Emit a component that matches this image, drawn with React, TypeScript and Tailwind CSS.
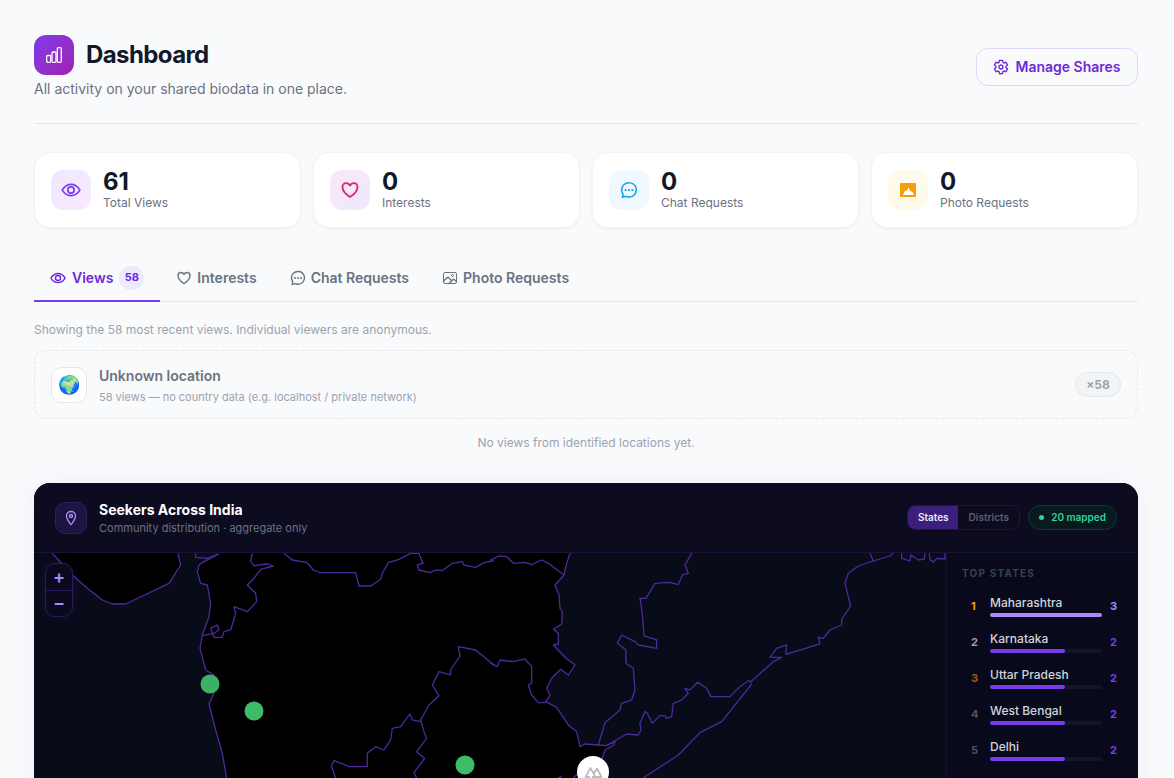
import {
  IoChatbubbleEllipsesOutline,
  IoEyeOutline,
  IoHeartOutline,
  IoImageOutline,
  IoLocationOutline,
  IoSettingsOutline,
} from "react-icons/io5";

const stats = [
  { value: "61", label: "Total Views", box: "bg-gradient-to-br from-[#ede9fe] to-[#fae8ff]", icon: <IoEyeOutline className="h-5 w-5 text-[#7c3aed] [&_circle]:stroke-[44] [&_path]:stroke-[44]" /> },
  { value: "0", label: "Interests", box: "bg-gradient-to-br from-[#fce7f3] to-[#ede9fe]", icon: <IoHeartOutline className="h-5 w-5 text-[#db2777] [&_path]:stroke-[48]" /> },
  { value: "0", label: "Chat Requests", box: "bg-[#f0f9ff]", icon: <IoChatbubbleEllipsesOutline className="h-[18px] w-[18px] text-[#0ea5e9] [&_path]:stroke-[44]" /> },
  {
    value: "0",
    label: "Photo Requests",
    box: "bg-[#fffbeb]",
    icon: (
      <svg viewBox="0 0 16 16" className="h-4 w-4">
        <rect width="16" height="14" y="1" rx="1" fill="#f59e0b" />
        <path d="M3 13l2.500-5 1 1.500 2-4 2.500 4.500 1-1 2 4z" fill="#fff" />
      </svg>
    ),
  },
];

const states = [
  { rank: "1", rankColor: "text-[#f59e0b]", name: "Maharashtra", count: "3", countColor: "text-[#a78bfa]", bar: "w-full bg-[#a78bfa]" },
  { rank: "2", rankColor: "text-[#9ca3af]", name: "Karnataka", count: "2", countColor: "text-[#7c3aed]", bar: "w-[67%] bg-[#7c3aed]" },
  { rank: "3", rankColor: "text-[#b45309]", name: "Uttar Pradesh", count: "2", countColor: "text-[#7c3aed]", bar: "w-[67%] bg-[#7c3aed]" },
  { rank: "4", rankColor: "text-[#4b5563]", name: "West Bengal", count: "2", countColor: "text-[#7c3aed]", bar: "w-[67%] bg-[#7c3aed]" },
  { rank: "5", rankColor: "text-[#4b5563]", name: "Delhi", count: "2", countColor: "text-[#7c3aed]", bar: "w-[67%] bg-[#7c3aed]" },
];

// borders traced from the map, in 3x units relative to the left / right half
const leftLines = [
  "485,10 485,22 520,25 555,12",
  "555,12 510,35 495,45 490,65 500,100 520,105 530,160 525,200 505,255 498,295 510,340 515,360 540,375 540,430 525,462 545,540 565,610 578,684",
  "655,10 650,35 660,47 700,42 718,48 680,58 660,85 640,105 665,130 668,155 640,185 600,170 605,190 590,240 570,245 565,262 540,262 530,235 550,225 555,240 540,250 505,257",
  "750,10 775,30 820,38 838,60 860,68 965,68 975,108 1010,108 1040,88 1045,70 1063,38 1095,28 1130,10 1155,10 1167,40 1150,45 1155,60 1190,68 1205,60 1225,62 1255,40 1285,35 1290,45 1325,52 1350,38 1380,32",
  "1380,345 1325,300 1273,290 1278,318 1250,360 1250,375 1215,365 1195,405 1215,437 1185,465 1160,510 1170,545 1178,565 1148,605 1172,625 1140,668 1148,684",
  "1160,515 1135,510 1128,492 1100,530 1075,535 1070,570 1050,600 1025,590 1000,610 1000,650 945,650 935,645 900,632 892,648 905,684",
  "55,10 115,75 160,115 205,150 235,162 275,162 405,100 440,45 432,10",
];

const rightLines = [
  "0,32 25,18 50,20 70,40 105,37 125,44 155,30 175,40 222,75",
  "240,10 230,40 222,75 195,105 207,135 210,175 217,185 215,222 190,238 205,250 205,282 190,285 228,325 255,345 235,375 212,358 185,385 170,415 180,435 167,455 200,472 235,525 260,545 270,590 285,582 325,585 350,587 375,575 372,585 345,600 335,630",
  "0,338 22,350 30,330 70,335 105,327 125,350 125,400 115,405 125,435 145,458 167,458",
  "605,10 585,45 595,70 578,75 565,103 535,97 495,100 468,145 450,145 457,190 462,258 500,270 500,295 445,285 435,275 395,255 382,280 408,300 408,340 430,355 435,420 425,450 395,460 390,480 345,518 325,585",
  "350,587 410,552 445,555 453,540 450,520 465,485 472,490 487,520 510,497 525,497 530,505 545,500 550,460 575,450 595,430 585,415 600,420 623,397 650,415 663,440 720,440 750,410 775,392 783,395",
  "460,684 565,615 630,548 695,515 783,405 783,395 850,335 875,322 840,322 860,295 890,285 888,313 990,282 985,262 1000,265 1020,240 1055,225 1055,208 1082,168 1065,100 1075,70 1105,48 1150,33 1140,10",
  "1150,33 1200,18 1210,10",
  "1235,10 1235,25 1260,33 1263,15 1285,30 1303,27 1305,10",
  "1318,10 1320,28 1330,37 1340,25 1365,27 1365,10",
  "205,684 215,680",
  "250,684 262,672",
];

function IndiaMap() {
  return (
    <svg viewBox="34 553 912 330" className="absolute inset-0 h-full w-full">
      {/* land */}
      <path d="M52 553L72 575 87 588 102 600 112 604 126 604 169 583 181 565 178 553z" fill="#000" />
      <path
        d="M219 553L199 565 197 572 201 583 207 585 211 603 209 617 202 635 200 648 204 663 206 670 214 675 214 693 209 704 216 730 222 753 227 778H600L602 760 605 750 615 742 607 746 598 745 585 744 580 747 577 732 568 725 557 707 546 702 550 695 547 688 552 678 561 669 568 675 575 665 566 658 553 645 558 644 558 633 553 629 562 624 562 612 560 608 559 595 555 585 564 575 567 563 570 553z"
        fill="#000"
      />
      <g transform="translate(34 550) scale(0.3333)" fill="none" stroke="#4c2a9c" strokeWidth="1.300" strokeLinejoin="round">
        {leftLines.map((p) => (
          <polyline key={p} points={p} vectorEffect="non-scaling-stroke" />
        ))}
      </g>
      <g transform="translate(490 550) scale(0.3333)" fill="none" stroke="#4c2a9c" strokeWidth="1.300" strokeLinejoin="round">
        {rightLines.map((p) => (
          <polyline key={p} points={p} vectorEffect="non-scaling-stroke" />
        ))}
      </g>
      {/* markers */}
      <circle cx="210" cy="684" r="9.500" fill="#3dbb68" fillOpacity="0.95" />
      <circle cx="254" cy="711" r="9.500" fill="#3dbb68" />
      <circle cx="465" cy="765" r="9.500" fill="#3dbb68" />
      <circle cx="593" cy="772" r="16" fill="#fff" />
      <path d="M590 777h-4.500l5-9 4.500 8M592 777h9.500l-4.500-8.500-3 4.500" fill="none" stroke="#bdbdbd" strokeWidth="1.800" strokeLinejoin="round" />
    </svg>
  );
}

export default function App() {
  return (
    <div className="h-[778px] overflow-hidden bg-[#f9fafc] pl-[34px] pr-[36px] pt-[35px] font-['Inter',sans-serif]">
      {/* Header */}
      <div className="flex items-start justify-between border-b border-[#e5e7eb] pb-[24px]">
        <div>
          <div className="flex items-center gap-3">
            <div className="flex h-10 w-10 items-center justify-center rounded-xl bg-gradient-to-br from-[#7c3aed] to-[#a21caf]">
              <svg viewBox="0 0 16 16" className="h-4 w-4" fill="none" stroke="#fff" strokeWidth="1.300">
                <rect x="0.700" y="8.500" width="4" height="6.800" rx="1" />
                <rect x="6" y="5" width="4" height="10.300" rx="1" />
                <rect x="11.300" y="0.700" width="4" height="14.600" rx="1" />
              </svg>
            </div>
            <h1 className="text-[24px] font-bold leading-8 tracking-[-0.6px] text-[#111827]">Dashboard</h1>
          </div>
          <p className="mt-1 text-sm leading-5 text-[#6b7280]">All activity on your shared biodata in one place.</p>
        </div>
        <button className="mt-[13px] flex h-[38px] w-[162px] items-center justify-center gap-1.5 rounded-xl border border-[#ddd6fe] text-sm font-semibold text-[#6d28d9]">
          <IoSettingsOutline className="h-4 w-4 [&_path]:stroke-[44]" />
          Manage Shares
        </button>
      </div>

      {/* Stat cards */}
      <div className="mt-[28px] grid grid-cols-4 gap-3">
        {stats.map((s) => (
          <div key={s.label} className="flex h-[76px] items-center gap-3 rounded-2xl border border-[#f3f4f6] bg-white px-4 shadow-[0_1px_3px_rgba(0,0,0,0.05)]">
            <div className={`flex h-10 w-10 items-center justify-center rounded-xl ${s.box}`}>{s.icon}</div>
            <div>
              <div className="text-[24px] font-bold leading-[26px] text-[#111827]">{s.value}</div>
              <div className="text-xs leading-4 text-[#6b7280]">{s.label}</div>
            </div>
          </div>
        ))}
      </div>

      {/* Tabs */}
      <div className="mt-[28px] flex h-[46px] items-stretch border-b border-[#e5e7eb] text-sm font-semibold text-[#6b7280]">
        <div className="-mb-px flex items-center gap-1.5 border-b-2 border-[#7c3aed] px-4 text-[#6d28d9]">
          <IoEyeOutline className="h-4 w-4 [&_circle]:stroke-[44] [&_path]:stroke-[44]" />
          Views
          <span className="flex h-6 w-[25px] items-center justify-center rounded-full bg-[#ede9fe] text-[11px] font-bold">58</span>
        </div>
        <div className="flex items-center gap-[5px] pb-[2px] pl-4 pr-[17px]">
          <IoHeartOutline className="h-4 w-4 [&_path]:stroke-[44]" />
          Interests
        </div>
        <div className="flex items-center gap-[5px] pb-[2px] pl-4 pr-[17px]">
          <IoChatbubbleEllipsesOutline className="h-4 w-4 [&_path]:stroke-[44]" />
          Chat Requests
        </div>
        <div className="flex items-center gap-[5px] pb-[2px] pl-4 pr-[17px]">
          <IoImageOutline className="h-4 w-4 [&_path]:stroke-[44]" />
          Photo Requests
        </div>
      </div>

      <p className="mt-5 text-xs leading-4 text-[#9ca3af]">Showing the 58 most recent views. Individual viewers are anonymous.</p>

      {/* Unknown location */}
      <div className="mt-3 flex h-[69px] items-center gap-3 rounded-xl border border-dashed border-[#e5e7eb] px-4">
        <div className="flex h-9 w-9 items-center justify-center rounded-[10px] border border-[#e5e7eb] bg-white text-lg">🌍</div>
        <div className="flex-1 pt-px">
          <div className="text-sm font-semibold leading-5 text-[#6b7280]">Unknown location</div>
          <div className="mt-[3px] text-[11px] leading-4 text-[#9ca3af]">58 views — no country data (e.g. localhost / private network)</div>
        </div>
        <span className="flex h-[25px] w-[46px] items-center justify-center rounded-full border border-[#e5e7eb] bg-[#f3f4f6] text-xs font-bold text-[#9ca3af]">×58</span>
      </div>

      <p className="mt-4 text-center text-xs leading-4 text-[#9ca3af]">No views from identified locations yet.</p>

      {/* Map card */}
      <div className="mt-8 h-[400px] overflow-hidden rounded-[16px] bg-[#080a1c] shadow-[0_4px_24px_rgba(76,29,149,0.06)]">
        <div className="flex h-[70px] items-center justify-between border-b border-[#1a1238] bg-[#0c0b20] px-[21px]">
          <div className="flex items-center gap-3">
            <div className="flex h-8 w-8 items-center justify-center rounded-[10px] border border-[#2e1f5e] bg-[#1e1442]">
              <IoLocationOutline className="h-4 w-4 text-[#a78bfa] [&_circle]:stroke-[44] [&_path]:stroke-[44]" />
            </div>
            <div>
              <div className="text-sm font-bold leading-5 text-white">Seekers Across India</div>
              <div className="text-[11px] leading-4 text-[#6b7280]">Community distribution · aggregate only</div>
            </div>
          </div>
          <div className="flex items-center gap-2">
            <div className="flex h-[25px] overflow-hidden rounded-lg border border-[#1e1442] text-[10px] font-semibold">
              <span className="flex w-[50px] items-center justify-center bg-[#3b1f7a] text-[#e9e5ff]">States</span>
              <span className="flex w-[61px] items-center justify-center text-[#5b5f72]">Districts</span>
            </div>
            <span className="flex h-[25px] items-center gap-[7px] rounded-full border border-[#0f3a35] bg-[#071a1e] px-[10px] text-[10px] font-semibold text-[#34d399]">
              <span className="h-[5px] w-[5px] rounded-full bg-[#34d399]" />
              20 mapped
            </span>
          </div>
        </div>

        <div className="flex h-[330px]">
          <div className="relative flex-1 bg-[#080b18]">
            <IndiaMap />
            <div className="absolute left-[11px] top-[10px] flex h-[54px] w-[28px] flex-col rounded-[10px] border border-[#2a1a5e] bg-[#0a0a1c] text-[#a78bfa] shadow-[0_0_12px_rgba(124,58,237,0.12)]">
              <span className="flex flex-1 items-center justify-center border-b border-[#2a1a5e] text-lg font-semibold leading-none">+</span>
              <span className="flex flex-1 items-center justify-center text-lg font-semibold leading-none">−</span>
            </div>
          </div>

          {/* Top states */}
          <div className="w-[192px] border-l border-[#14122c] bg-[#080a1c] pl-[15px] pr-[21px] pt-[12px]">
            <div className="text-[10px] font-bold leading-4 tracking-[1.2px] text-[#374151]">TOP STATES</div>
            <div className="mt-[15px] flex flex-col gap-[16px]">
              {states.map((s) => (
                <div key={s.name} className="flex h-5 items-center">
                  <span className={`w-7 pl-[9px] text-[11px] font-bold ${s.rankColor}`}>{s.rank}</span>
                  <div className="w-[112px]">
                    <div className="text-xs font-medium leading-[16px] text-[#d1d5db]">{s.name}</div>
                    <div className="mt-[2px] h-1 rounded-full bg-[#12142a]">
                      <div className={`h-1 rounded-full ${s.bar}`} />
                    </div>
                  </div>
                  <span className={`ml-auto text-[11px] font-bold ${s.countColor}`}>{s.count}</span>
                </div>
              ))}
            </div>
          </div>
        </div>
      </div>
    </div>
  );
}
